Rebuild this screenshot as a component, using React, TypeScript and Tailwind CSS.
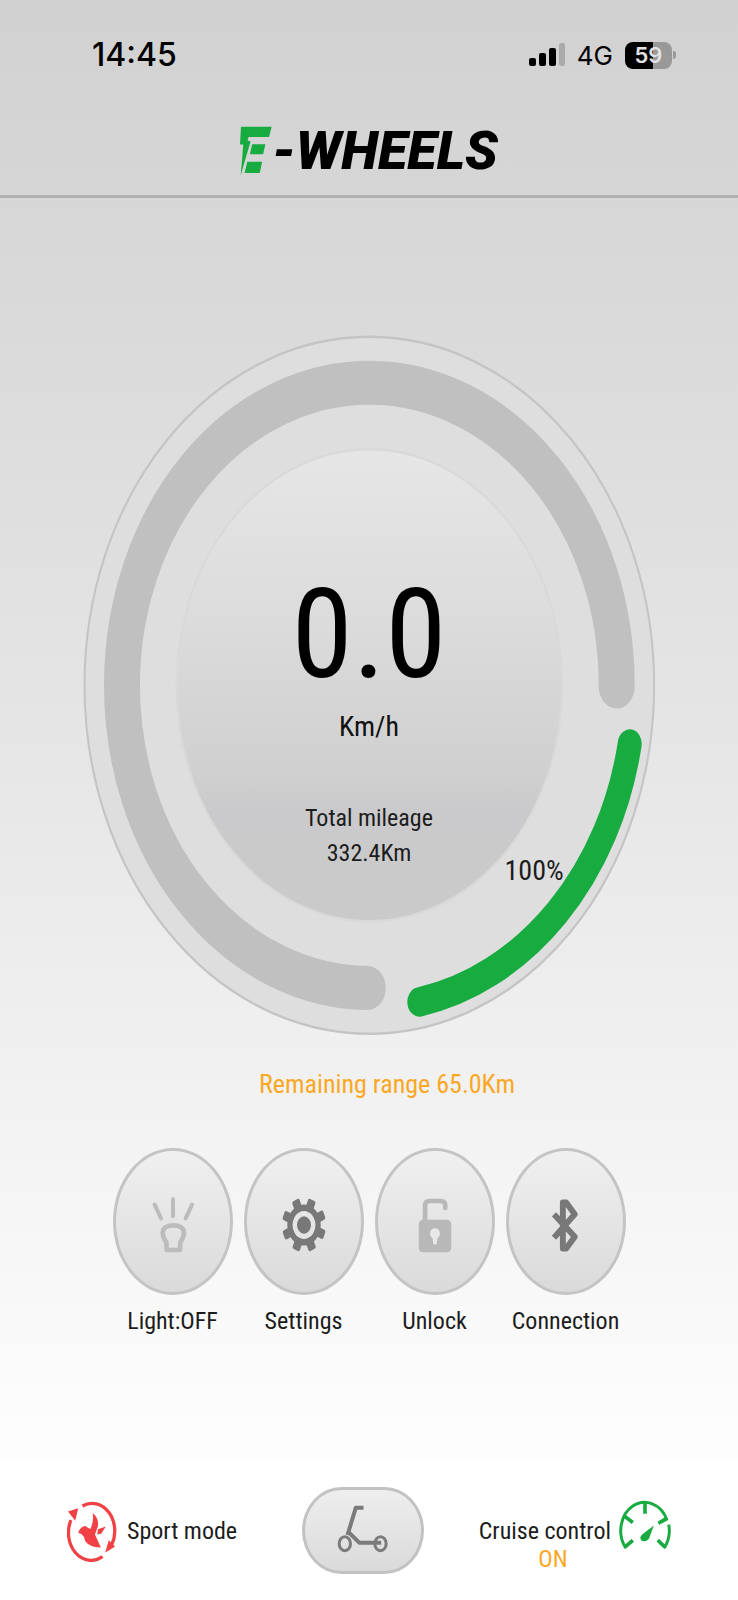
const LightIcon = () => (
  <svg viewBox="158 182 126 168" className="h-14 w-[42px]" fill="none" stroke="#bcbcbc" strokeLinecap="round" strokeLinejoin="round" aria-hidden="true">
    <path strokeWidth="12" d="M166 205L185 246M221 189V240M278 205L259 246" />
    <path strokeWidth="14" d="M202 341L201 318C192 304 190 296 190 289C190 274 204 267 222 267S254 274 254 289C254 296 252 304 243 318L242 341Z" />
  </svg>
)

const SettingsIcon = () => (
  <svg viewBox="0 0 100 100" preserveAspectRatio="none" className="h-[54px] w-[44px]" fill="#787878" aria-hidden="true">
    {[22, 67, 112, 157, 202, 247, 292, 337].map((angle) => (
      <rect key={angle} x="41" y="0" width="18" height="24" rx="4" transform={`rotate(${angle} 50 50)`} />
    ))}
    <circle cx="50" cy="50" r="32" fill="none" stroke="#787878" strokeWidth="12" />
    <circle cx="50" cy="50" r="16" />
  </svg>
)

const UnlockIcon = () => (
  <svg viewBox="172 184 102 166" className="h-[55px] w-[34px]" aria-hidden="true">
    <path d="M193 256V207Q193 193 207 193H240Q254 193 254 207V214" fill="none" stroke="#b8b8b8" strokeWidth="14" strokeLinecap="round" />
    <rect x="174" y="250" width="98" height="98" rx="13" fill="#b8b8b8" />
    <path d="M223 275C232 275 238 282 238 291C238 297 234 302 230 306L228 322Q223 328 218 322L216 306C212 302 208 297 208 291C208 282 214 275 223 275Z" fill="#e8e8e8" />
  </svg>
)

const BluetoothIcon = () => (
  <svg viewBox="580 178 82 164" className="h-[55px] w-[27px]" fill="none" stroke="#787878" strokeWidth="18" strokeLinejoin="round" aria-hidden="true">
    <path d="M586 226L649 294L623 330H613V190H623L649 226L586 297" />
  </svg>
)

const SportIcon = () => (
  <svg viewBox="50 86 152 186" className="h-[62px] w-[50px] shrink-0" fill="#f04145" aria-hidden="true">
    <g fill="none" stroke="#f04145" strokeWidth="10">
      <path d="M97 103A69 84 0 0 1 186 221" />
      <path d="M158 257A69 84 0 0 1 62 146" />
    </g>
    <path d="M53 120L84 110L75 148ZM177 207L196 226L166 245Z" />
    <path d="M128 124C144 136 149 158 141 173L135 190L153 229C122 228 104 216 103 200Q98 188 84 184Q92 164 106 164Q113 170 121 173Q132 150 128 124Z" />
    <path d="M144 174L168 165L154 187L142 190Z" />
  </svg>
)

const ScooterIcon = () => (
  <svg viewBox="140 102 152 144" className="h-12 w-[51px]" fill="none" stroke="#7b7b7b" aria-hidden="true">
    <path strokeWidth="12" strokeLinejoin="round" d="M219 110H196L171 192M173 182L206 215H272" />
    <g strokeWidth="9">
      <ellipse cx="163" cy="218" rx="17" ry="21" />
      <ellipse cx="270" cy="218" rx="17" ry="21" />
    </g>
  </svg>
)

const CruiseIcon = () => (
  <svg viewBox="446 90 158 148" className="mb-3 h-[49px] w-[52px] shrink-0" fill="none" stroke="#18ab40" strokeWidth="9" strokeLinejoin="round" aria-hidden="true">
    <path d="M487 212L465 233A73 86 0 1 1 591 148L566 160M597 164A73 86 0 0 1 585 233L564 212" />
    <path strokeWidth="11" d="M525 97V131M463 139L488 158M566 160L588 147M467 230L488 212M583 230L564 212" />
    <path d="M552 167L537 207Q527 219 515 213Q505 204 518 193Z" fill="#18ab40" stroke="none" />
  </svg>
)

const actions = [
  { label: 'Light:OFF', icon: LightIcon },
  { label: 'Settings', icon: SettingsIcon },
  { label: 'Unlock', icon: UnlockIcon },
  { label: 'Connection', icon: BluetoothIcon },
]

function StatusBar() {
  return (
    <div className="flex h-[110px] items-center justify-between pr-[62px] pl-[92px] font-['Inter',sans-serif]">
      <span className="text-[32px] font-medium">14:45</span>
      <div className="flex items-center">
        <svg viewBox="0 0 37 24" className="h-6 w-[37px]" aria-hidden="true">
          <rect x="1" y="15" width="7" height="8" rx="2" />
          <rect x="11" y="10" width="7" height="13" rx="2" />
          <rect x="21" y="5" width="7" height="18" rx="2" />
          <rect x="31" y="0" width="6" height="23" rx="2" fill="#aaaaaa" />
        </svg>
        <span className="ml-3 text-[26px]">4G</span>
        <span className="ml-3 flex h-[27px] w-[47px] items-center justify-center rounded-lg bg-linear-to-r from-black from-60% to-[#999999] to-60% text-[22px] font-semibold text-[#e2e2e2]">
          59
        </span>
        <span className="ml-px h-2 w-[3px] rounded-r-full bg-[#999999]" />
      </div>
    </div>
  )
}

function Header() {
  return (
    <header className="flex h-[88px] items-center justify-center border-b-[3px] border-[#b0b0b0] pb-1">
      <h1 className="flex items-center">
        <svg viewBox="60 46 97 151" className="h-[50px] w-8" fill="#18ab40" role="img" aria-label="E">
          <path d="M63 48H156L148 79H86L83 90L92 93L62 196L70 102H60Z" />
          <path d="M97 101H137L130 131H90ZM82 154H127L120 188H74Z" />
        </svg>
        <span className="text-[54px] leading-none font-black italic font-['Roboto',sans-serif]">-WHEELS</span>
      </h1>
    </header>
  )
}

function Gauge() {
  return (
    <section className="relative mx-auto mt-[137px] grid w-[77.6%]">
      <svg viewBox="0 0 573 573" preserveAspectRatio="none" className="col-start-1 row-start-1 aspect-[573/701] w-full" fill="none" aria-hidden="true">
        <defs>
          <linearGradient id="dial" x1="0" y1="0" x2="0" y2="1">
            <stop offset="0" stopColor="#e6e6e6" />
            <stop offset="0.35" stopColor="#dcdcdc" />
            <stop offset="0.7" stopColor="#cfcfcf" />
            <stop offset="0.76" stopColor="#cacacc" />
            <stop offset="1" stopColor="#cacaca" />
          </linearGradient>
        </defs>
        <circle cx="286.5" cy="286.5" r="285" fill="#dedede" stroke="#c4c4c4" strokeWidth="2" />
        <circle cx="286.5" cy="286.5" r="193" fill="url(#dial)" stroke="#d9d9d9" strokeWidth="2" />
        <path d="M285 534A247.5 247.5 0 1 1 534 287.5" stroke="#c0c0c0" strokeWidth="36" strokeLinecap="round" />
        <path d="M547 334.5A264.5 264.5 0 0 1 336.5 545.5" stroke="#18ab40" strokeWidth="24" strokeLinecap="round" />
      </svg>
      <div className="col-start-1 row-start-1 flex flex-col items-center self-center pt-[76px] text-center text-2xl text-[#1c1c1c]">
        <p className="text-[124px] leading-[120px] text-black">0.0</p>
        <p className="mt-3 text-[28px] leading-10 text-[#111111]">Km/h</p>
        <p className="mt-[54px] leading-[35px]">
          Total mileage
          <br />
          332.4Km
        </p>
      </div>
      <span className="absolute top-[74%] right-[16%] text-[28px] leading-9 text-[#1c1c1c]">100%</span>
    </section>
  )
}

export default function App() {
  return (
    <div className="flex min-h-screen flex-col bg-linear-to-b from-[#d1d1d1] via-[#e5e5e5] via-45% to-[#fdfdfd] to-90% font-['Roboto_Condensed','Roboto',sans-serif] text-black">
      <StatusBar />
      <Header />
      <main>
        <Gauge />
        <p className="mt-8 pl-9 text-center text-[26px] leading-8 text-[#f9a825]">Remaining range 65.0Km</p>
        <div className="mt-12 flex justify-center gap-[11px]">
          {actions.map((action) => (
            <button key={action.label} type="button" className="flex w-[120px] flex-col items-center text-2xl leading-7 text-[#1c1c1c]">
              <span className="flex h-[147px] w-full items-center justify-center rounded-[50%] border-[3px] border-[#c4c4c4] bg-linear-to-b from-[#f0f0f0] to-[#dadada] pt-2">
                <action.icon />
              </span>
              <span className="mt-3">{action.label}</span>
            </button>
          ))}
        </div>
      </main>
      <footer className="mt-auto flex items-center justify-between bg-white px-[67px] py-[26px] text-2xl leading-7 text-[#1c1c1c]">
        <button type="button" className="flex min-w-[180px] items-center gap-2.5">
          <SportIcon />
          Sport mode
        </button>
        <button type="button" aria-label="Scooter" className="flex h-[87px] w-[122px] items-center justify-center rounded-[40px/44px] border-[3px] border-[#c2c2c2] bg-linear-to-b from-[#eeeeee] to-[#dadada] pb-1">
          <ScooterIcon />
        </button>
        <button type="button" className="flex items-center gap-2">
          <span className="flex flex-col items-center pt-7">
            Cruise control
            <span className="pl-4 text-[#f9a825]">ON</span>
          </span>
          <CruiseIcon />
        </button>
      </footer>
    </div>
  )
}
